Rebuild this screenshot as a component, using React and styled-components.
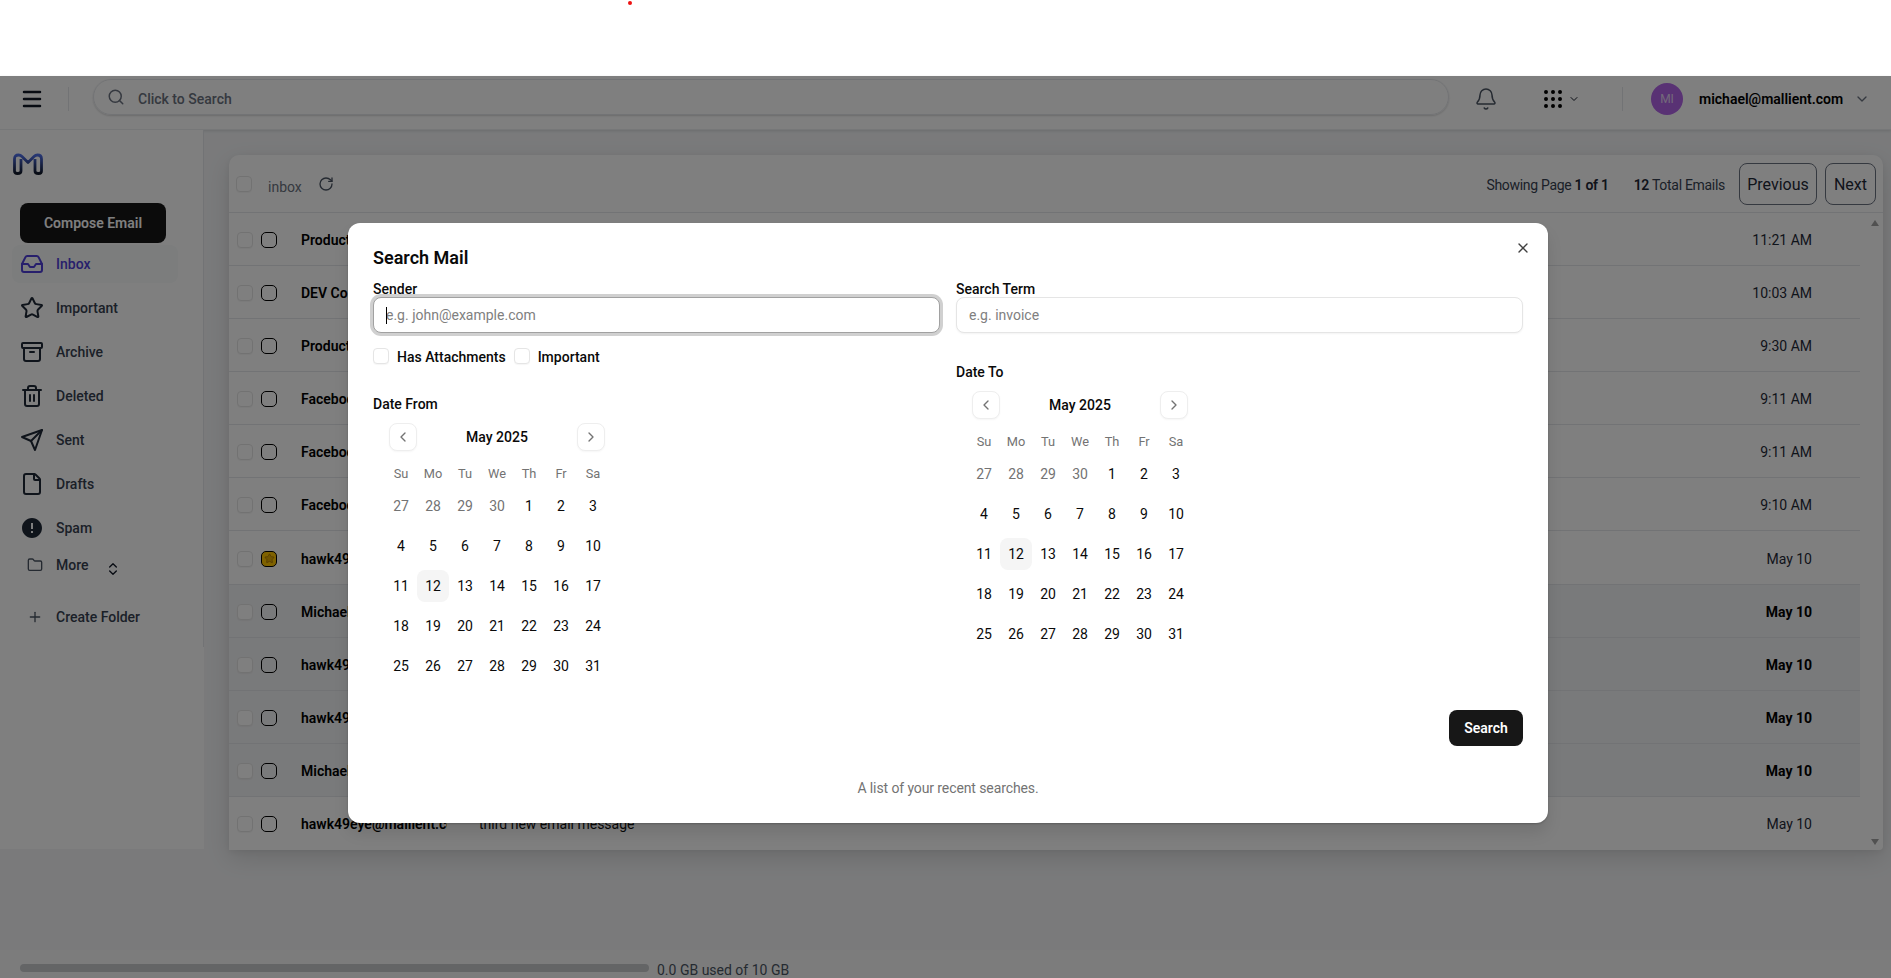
import styled, { createGlobalStyle } from "styled-components";
import {
  Archive,
  Bell,
  ChevronDown,
  ChevronLeft,
  ChevronRight,
  ChevronsUpDown,
  File,
  Folder,
  Grip,
  Inbox,
  Menu,
  Plus,
  RotateCw,
  Search,
  Star,
  Trash2,
  X,
} from "lucide-react";
import { FiSend } from "react-icons/fi";
import { MdError } from "react-icons/md";

const GlobalStyle = createGlobalStyle`
  html, body {
    margin: 0;
    height: 100%;
    overflow: hidden;
  }
  body {
    font-family: Roboto, "Noto Sans", "Liberation Sans", sans-serif;
    font-size: 14px;
    color: #0a0a0a;
    background: #fff;
  }
  * { box-sizing: border-box; }
`;

/* ---------------- Layout ---------------- */
const Page = styled.div`
  height: 100vh;
  display: flex;
  flex-direction: column;
`;

const TopBand = styled.div`
  height: 76px;
  flex: none;
  background: #fff;
  padding: 1px 0 0 628px;
`;

const RedDot = styled.div`
  width: 4px;
  height: 4px;
  border-radius: 50%;
  background: #ee1111;
`;

const Shell = styled.div`
  position: relative;
  flex: 1;
  min-height: 0;
  display: flex;
  flex-direction: column;
  background: #f4f5f7;
`;

/* ---------------- Header ---------------- */
const Header = styled.header`
  height: 54px;
  flex: none;
  display: flex;
  align-items: center;
  padding: 0 0 8px 20px;
  background: #fff;
  border-bottom: 1px solid #eceef1;
  box-shadow: 0 1px 3px rgba(0, 0, 0, 0.12);
  color: #111827;
`;

const VRule = styled.div`
  width: 1px;
  height: 24px;
  background: #e5e7eb;
  margin-left: ${(p) => p.$left}px;
`;

const SearchPill = styled.div`
  width: 1356px;
  height: 36px;
  margin: -4px 0 0 24px;
  padding: 0 0 0 13px;
  display: flex;
  align-items: center;
  gap: 13px;
  border: 1px solid #e5e7eb;
  border-radius: 18px;
  box-shadow: 0 1px 2px rgba(0, 0, 0, 0.16);
  color: #6b7280;
  font-weight: 500;
  span { padding-top: 4px; }
`;

const BellButton = styled.div`
  display: flex;
  margin-left: 25px;
  color: #4b5563;
`;

const AppsButton = styled.div`
  display: flex;
  align-items: center;
  gap: 3px;
  margin-left: 43px;
`;

const Avatar = styled.div`
  width: 32px;
  height: 32px;
  margin-left: 28px;
  border-radius: 50%;
  display: flex;
  align-items: center;
  justify-content: center;
  background: #b264e8;
  color: #e5d5f5;
  font-size: 12px;
`;

const UserEmail = styled.div`
  margin-left: 16px;
  font-weight: 600;
  color: #000;
`;

const UserChevron = styled(ChevronDown)`
  margin-left: 11px;
  color: #6b7280;
`;

/* ---------------- Body ---------------- */
const Body = styled.div`
  flex: 1;
  min-height: 0;
  display: flex;
  align-items: flex-start;
`;

const Sidebar = styled.aside`
  width: 204px;
  height: 719px;
  flex: none;
  background: #fff;
`;

const SideInner = styled.div`
  height: 517px;
  padding: 23px 0 0 12px;
  border-right: 1px solid #e5e7eb;
`;

const LogoMark = styled.svg`
  display: block;
  width: 32px;
  height: 24px;
`;

const ComposeButton = styled.button`
  display: block;
  width: 146px;
  height: 40px;
  margin: 26px 0 2px 8px;
  border: 0;
  border-radius: 8px;
  background: #171717;
  color: #fff;
  font: 600 14px Roboto, sans-serif;
`;

const NavItem = styled.div`
  width: 166px;
  height: 38px;
  margin-top: ${(p) => (p.$active ? 0 : 6)}px;
  padding-left: 8px;
  display: flex;
  align-items: center;
  gap: 12px;
  border-radius: 8px;
  font-weight: 500;
  color: ${(p) => (p.$active ? "#4f3fd8" : "#374151")};
  background: ${(p) => (p.$active ? "#f8fafa" : "transparent")};
  svg { color: ${(p) => (p.$active ? "#4f3fd8" : "#1f2937")}; }
`;

const SubItem = styled.div`
  height: 24px;
  margin-top: ${(p) => p.$top}px;
  padding-left: 15px;
  display: flex;
  align-items: center;
  gap: 13px;
  font-weight: 500;
  color: #374151;
  svg { color: #4b5563; }
`;

const MoreToggle = styled(ChevronsUpDown)`
  margin: 8px 0 0 3px;
  && { color: #111827; }
`;

const Main = styled.main`
  flex: 1;
  min-width: 0;
  padding: 25px 8px 0 25px;
`;

/* ---------------- Mail list ---------------- */
const Card = styled.section`
  height: 695px;
  display: flex;
  flex-direction: column;
  background: #fff;
  border-radius: 10px 10px 4px 4px;
  box-shadow: 0 8px 24px rgba(0, 0, 0, 0.12), 0 2px 6px rgba(0, 0, 0, 0.06);
`;

const Toolbar = styled.div`
  height: 58px;
  flex: none;
  display: flex;
  align-items: center;
  padding: 0 7px 0 7px;
  border-bottom: 1px solid #e5e7eb;
`;

const ToolbarLabel = styled.span`
  margin: 6px 0 0 16px;
  color: #6b7280;
`;

const RefreshIcon = styled(RotateCw)`
  margin-left: 16px;
  color: #4b5563;
`;

const PageInfo = styled.span`
  margin: 2px 0 0 ${(p) => p.$left};
  letter-spacing: -0.3px;
  color: #374151;
  b { font-weight: 600; color: #1f2937; }
`;

const PagerButton = styled.button`
  width: ${(p) => p.$width}px;
  height: 42px;
  margin-left: ${(p) => p.$left}px;
  padding: 1px 0 0;
  background: transparent;
  border: 1px solid #6b7280;
  border-radius: 8px;
  color: #1f2937;
  font: 400 16px Roboto, sans-serif;
`;

const ListArea = styled.div`
  flex: 1;
  min-height: 0;
  display: flex;
`;

const Rows = styled.div`
  flex: 1;
  min-width: 0;
`;

const Row = styled.div`
  height: 53.08px;
  display: flex;
  align-items: center;
  padding: 2px 48px 0 8px;
  border-bottom: ${(p) => (p.$last ? "0" : "1px solid #e5e7eb")};
  background: ${(p) => (p.$unread ? "#f3f4f6" : "#fff")};
`;

const Check = styled.input.attrs({ type: "checkbox" })`
  appearance: none;
  flex: none;
  width: 16px;
  height: 16px;
  margin: 0;
  background: #fff;
  border: 1px solid #e5e5e5;
  border-radius: 4px;
  box-shadow: 0 1px 1px rgba(0, 0, 0, 0.04);
`;

const StarBox = styled.div`
  flex: none;
  width: 16px;
  height: 16px;
  margin-left: 8px;
  display: flex;
  align-items: center;
  justify-content: center;
  border: 1.5px solid #000;
  border-radius: 5px;
  background: ${(p) => (p.$on ? "#ffc400" : "transparent")};
  svg { color: #b07c00; fill: #e0a800; }
`;

const Sender = styled.div`
  width: 146px;
  margin-left: 24px;
  overflow: hidden;
  white-space: nowrap;
  font-weight: 600;
  color: #000;
`;

const Subject = styled.div`
  margin-left: 32px;
  color: #111;
`;

const Time = styled.div`
  margin-left: auto;
  color: #1f2937;
  font-weight: ${(p) => (p.$bold ? 700 : 400)};
  ${(p) => p.$bold && "color: #000;"}
`;

const ScrollTrack = styled.div`
  width: 23px;
  flex: none;
  padding: 7px 4px 5px 11px;
  display: flex;
  flex-direction: column;
  justify-content: space-between;
`;

const ScrollArrow = styled.div`
  width: 0;
  height: 0;
  border-left: 4.5px solid transparent;
  border-right: 4.5px solid transparent;
  ${(p) => (p.$down ? "border-top" : "border-bottom")}: 6px solid #a3a3a3;
`;

/* ---------------- Storage ---------------- */
const Storage = styled.footer`
  height: 28px;
  flex: none;
  display: flex;
  align-items: center;
  gap: 8px;
  padding: 8px 0 0 20px;
  background: #f9f9f9;
  color: #4b5563;
  span { padding-top: 3px; }
`;

const StorageBar = styled.div`
  width: 629px;
  height: 8px;
  border-radius: 4px;
  background: #c8cacd;
`;

/* ---------------- Modal ---------------- */
const Backdrop = styled.div`
  position: absolute;
  inset: 0;
  z-index: 10;
  padding: 147px 0 0 348px;
  background: rgba(0, 0, 0, 0.5);
`;

const Modal = styled.div`
  position: relative;
  width: 1200px;
  height: 600px;
  padding: 21px 25px 0;
  background: #fff;
  border-radius: 12px;
  box-shadow: 0 10px 15px rgba(0, 0, 0, 0.1), 0 1px 2px rgba(0, 0, 0, 0.2);
`;

const ModalTitle = styled.h2`
  margin: 0;
  font-size: 18px;
  line-height: 28px;
  font-weight: 600;
`;

const CloseButton = styled.button`
  position: absolute;
  top: 17px;
  right: 17px;
  padding: 0;
  display: flex;
  background: none;
  border: 0;
  color: #404040;
`;

const FormGrid = styled.div`
  display: grid;
  grid-template-columns: 1fr 1fr;
  gap: 16px;
  margin-top: 8px;
`;

const FieldLabel = styled.label`
  display: block;
  padding-top: 2px;
  font-weight: 500;
  line-height: ${(p) => (p.$date ? 18 : 15)}px;
  margin-top: ${(p) => p.$top || 0}px;
`;

const InputWrap = styled.div`
  position: relative;
`;

const TextInput = styled.input`
  display: block;
  width: 100%;
  height: 36px;
  padding: 0 12px;
  background: #fff;
  border: 1px solid #e5e5e5;
  border-radius: 8px;
  box-shadow: 0 1px 2px rgba(0, 0, 0, 0.05);
  font: 400 14px Roboto, sans-serif;
  outline: none;
  &::placeholder { color: #808080; }
  &:focus {
    border-color: #a1a1a1;
    box-shadow: 0 0 0 3px rgba(161, 161, 161, 0.5);
  }
`;

const TextCaret = styled.span`
  position: absolute;
  top: 10px;
  left: 13px;
  width: 1px;
  height: 17px;
  background: #000;
`;

const CheckRow = styled.div`
  display: flex;
  align-items: center;
  height: 16px;
  margin-top: 15px;
`;

const CheckLabel = styled.span`
  margin: 2px 8px 0;
  font-weight: 500;
`;

const Calendar = styled.div`
  width: 248px;
  margin-top: 10px;
  padding: 0 12px;
`;

const CalendarNav = styled.div`
  display: flex;
  align-items: center;
  justify-content: space-between;
  padding: 0 4px;
  height: 28px;
  font-weight: 500;
`;

const NavArrow = styled.button`
  width: 28px;
  height: 28px;
  padding: 0;
  display: flex;
  align-items: center;
  justify-content: center;
  background: #fff;
  border: 1px solid #eeeeee;
  border-radius: 8px;
  box-shadow: 0 1px 2px rgba(0, 0, 0, 0.04);
  color: #737373;
`;

const WeekRow = styled.div`
  display: grid;
  grid-template-columns: repeat(7, 32px);
  margin-top: ${(p) => p.$top}px;
`;

const Weekday = styled.div`
  height: 20px;
  line-height: 20px;
  text-align: center;
  font-size: 12.8px;
  color: #737373;
`;

const Day = styled.div`
  height: 32px;
  line-height: 32px;
  text-align: center;
  border-radius: 8px;
  color: ${(p) => (p.$muted ? "#737373" : "#0a0a0a")};
  background: ${(p) => (p.$today ? "#f5f5f5" : "transparent")};
`;

const ModalActions = styled.div`
  display: flex;
  justify-content: flex-end;
  margin-top: 28px;
`;

const SearchButton = styled.button`
  width: 74px;
  height: 36px;
  border: 0;
  border-radius: 8px;
  background: #171717;
  color: #fff;
  font: 600 14px Roboto, sans-serif;
`;

const Caption = styled.p`
  margin: 32px 0 0;
  line-height: 20px;
  letter-spacing: -0.1px;
  text-align: center;
  color: #737373;
`;

/* ---------------- Data ---------------- */
const navItems = [
  { label: "Inbox", icon: <Inbox size={24} />, active: true },
  { label: "Important", icon: <Star size={24} /> },
  { label: "Archive", icon: <Archive size={24} /> },
  { label: "Deleted", icon: <Trash2 size={24} /> },
  { label: "Sent", icon: <FiSend size={24} /> },
  { label: "Drafts", icon: <File size={24} /> },
  { label: "Spam", icon: <MdError size={24} /> },
];

const mails = [
  { sender: "Product Hunt", time: "11:21 AM" },
  { sender: "DEV Community", time: "10:03 AM" },
  { sender: "Product Hunt", time: "9:30 AM" },
  { sender: "Facebook", time: "9:11 AM" },
  { sender: "Facebook", time: "9:11 AM" },
  { sender: "Facebook", time: "9:10 AM" },
  { sender: "hawk49eye@mallient.com", time: "May 10", starred: true },
  { sender: "Michael", time: "May 10", unread: true },
  { sender: "hawk49eye@mallient.com", time: "May 10", unread: true },
  { sender: "hawk49eye@mallient.com", time: "May 10", unread: true },
  { sender: "Michael", time: "May 10", unread: true },
  { sender: "hawk49eye@mallient.com", subject: "third new email message", time: "May 10" },
];

const weekdays = ["Su", "Mo", "Tu", "We", "Th", "Fr", "Sa"];

const weeks = [
  [27, 28, 29, 30, 1, 2, 3],
  [4, 5, 6, 7, 8, 9, 10],
  [11, 12, 13, 14, 15, 16, 17],
  [18, 19, 20, 21, 22, 23, 24],
  [25, 26, 27, 28, 29, 30, 31],
];

/* ---------------- Components ---------------- */
function Logo() {
  return (
    <LogoMark viewBox="0 0 32 24" fill="none">
      <defs>
        <linearGradient id="logoStroke" x1="0" y1="0" x2="0" y2="1">
          <stop offset="0" stopColor="#4f6fe8" />
          <stop offset="1" stopColor="#101828" />
        </linearGradient>
      </defs>
      <path
        d="M5.5 20.5 Q2.5 20.5 2.5 18 V6 Q2.5 2 6.5 2 Q8.5 2 10 3.5 L16 9.5 L22 3.5 Q23.5 2 25.5 2 Q29.5 2 29.5 6 V18 Q29.5 20.5 26.5 20.5 Q23 20.5 23 18 V6 M5.5 20.5 Q9 20.5 9 18 V6"
        stroke="url(#logoStroke)"
        strokeWidth="2.8"
        strokeLinejoin="round"
      />
    </LogoMark>
  );
}

function MonthCalendar() {
  return (
    <Calendar>
      <CalendarNav>
        <NavArrow>
          <ChevronLeft size={16} />
        </NavArrow>
        May 2025
        <NavArrow>
          <ChevronRight size={16} />
        </NavArrow>
      </CalendarNav>
      <WeekRow $top={13}>
        {weekdays.map((d) => (
          <Weekday key={d}>{d}</Weekday>
        ))}
      </WeekRow>
      {weeks.map((week, w) => (
        <WeekRow key={w} $top={w === 0 ? 6 : 8}>
          {week.map((d) => (
            <Day key={d} $muted={w === 0 && d > 20} $today={d === 12}>
              {d}
            </Day>
          ))}
        </WeekRow>
      ))}
    </Calendar>
  );
}

function SearchDialog() {
  return (
    <Backdrop>
      <Modal>
        <ModalTitle>Search Mail</ModalTitle>
        <CloseButton>
          <X size={16} />
        </CloseButton>
        <FormGrid>
          <div>
            <FieldLabel>Sender</FieldLabel>
            <InputWrap>
              <TextInput placeholder="e.g. john@example.com" autoFocus />
              <TextCaret />
            </InputWrap>
            <CheckRow>
              <Check />
              <CheckLabel>Has Attachments</CheckLabel>
              <Check />
              <CheckLabel>Important</CheckLabel>
            </CheckRow>
            <FieldLabel $date $top={29}>Date From</FieldLabel>
            <MonthCalendar />
          </div>
          <div>
            <FieldLabel>Search Term</FieldLabel>
            <TextInput placeholder="e.g. invoice" />
            <FieldLabel $date $top={28}>Date To</FieldLabel>
            <MonthCalendar />
          </div>
        </FormGrid>
        <ModalActions>
          <SearchButton>Search</SearchButton>
        </ModalActions>
        <Caption>A list of your recent searches.</Caption>
      </Modal>
    </Backdrop>
  );
}

export default function App() {
  return (
    <Page>
      <GlobalStyle />
      <TopBand>
        <RedDot />
      </TopBand>
      <Shell>
        <Header>
          <Menu size={24} strokeWidth={2.5} />
          <VRule $left={24} />
          <SearchPill>
            <Search size={18} />
            <span>Click to Search</span>
          </SearchPill>
          <BellButton>
            <Bell size={24} strokeWidth={1.5} />
          </BellButton>
          <AppsButton>
            <Grip size={24} color="#000" />
            <ChevronDown size={12} />
          </AppsButton>
          <VRule $left={42} />
          <Avatar>MI</Avatar>
          <UserEmail>michael@mallient.com</UserEmail>
          <UserChevron size={16} />
        </Header>
        <Body>
          <Sidebar>
            <SideInner>
              <Logo />
              <ComposeButton>Compose Email</ComposeButton>
              {navItems.map((item) => (
                <NavItem key={item.label} $active={item.active}>
                  {item.icon}
                  {item.label}
                </NavItem>
              ))}
              <SubItem $top={6}>
                <Folder size={16} />
                More
                <MoreToggle size={16} />
              </SubItem>
              <SubItem $top={28}>
                <Plus size={16} />
                Create Folder
              </SubItem>
            </SideInner>
          </Sidebar>
          <Main>
            <Card>
              <Toolbar>
                <Check />
                <ToolbarLabel>inbox</ToolbarLabel>
                <RefreshIcon size={16} />
                <PageInfo $left="auto">
                  Showing Page <b>1 of 1</b>
                </PageInfo>
                <PageInfo $left="25px">
                  <b>12</b> Total Emails
                </PageInfo>
                <PagerButton $left={14} $width={78}>Previous</PagerButton>
                <PagerButton $left={8} $width={51}>Next</PagerButton>
              </Toolbar>
              <ListArea>
                <Rows>
                  {mails.map((mail, i) => (
                    <Row key={i} $unread={mail.unread} $last={i === mails.length - 1}>
                      <Check />
                      <StarBox $on={mail.starred}>
                        {mail.starred && <Star size={11} />}
                      </StarBox>
                      <Sender>{mail.sender}</Sender>
                      {mail.subject && <Subject>{mail.subject}</Subject>}
                      <Time $bold={mail.unread}>{mail.time}</Time>
                    </Row>
                  ))}
                </Rows>
                <ScrollTrack>
                  <ScrollArrow />
                  <ScrollArrow $down />
                </ScrollTrack>
              </ListArea>
            </Card>
          </Main>
        </Body>
        <Storage>
          <StorageBar />
          <span>0.0 GB used of 10 GB</span>
        </Storage>
        <SearchDialog />
      </Shell>
    </Page>
  );
}
